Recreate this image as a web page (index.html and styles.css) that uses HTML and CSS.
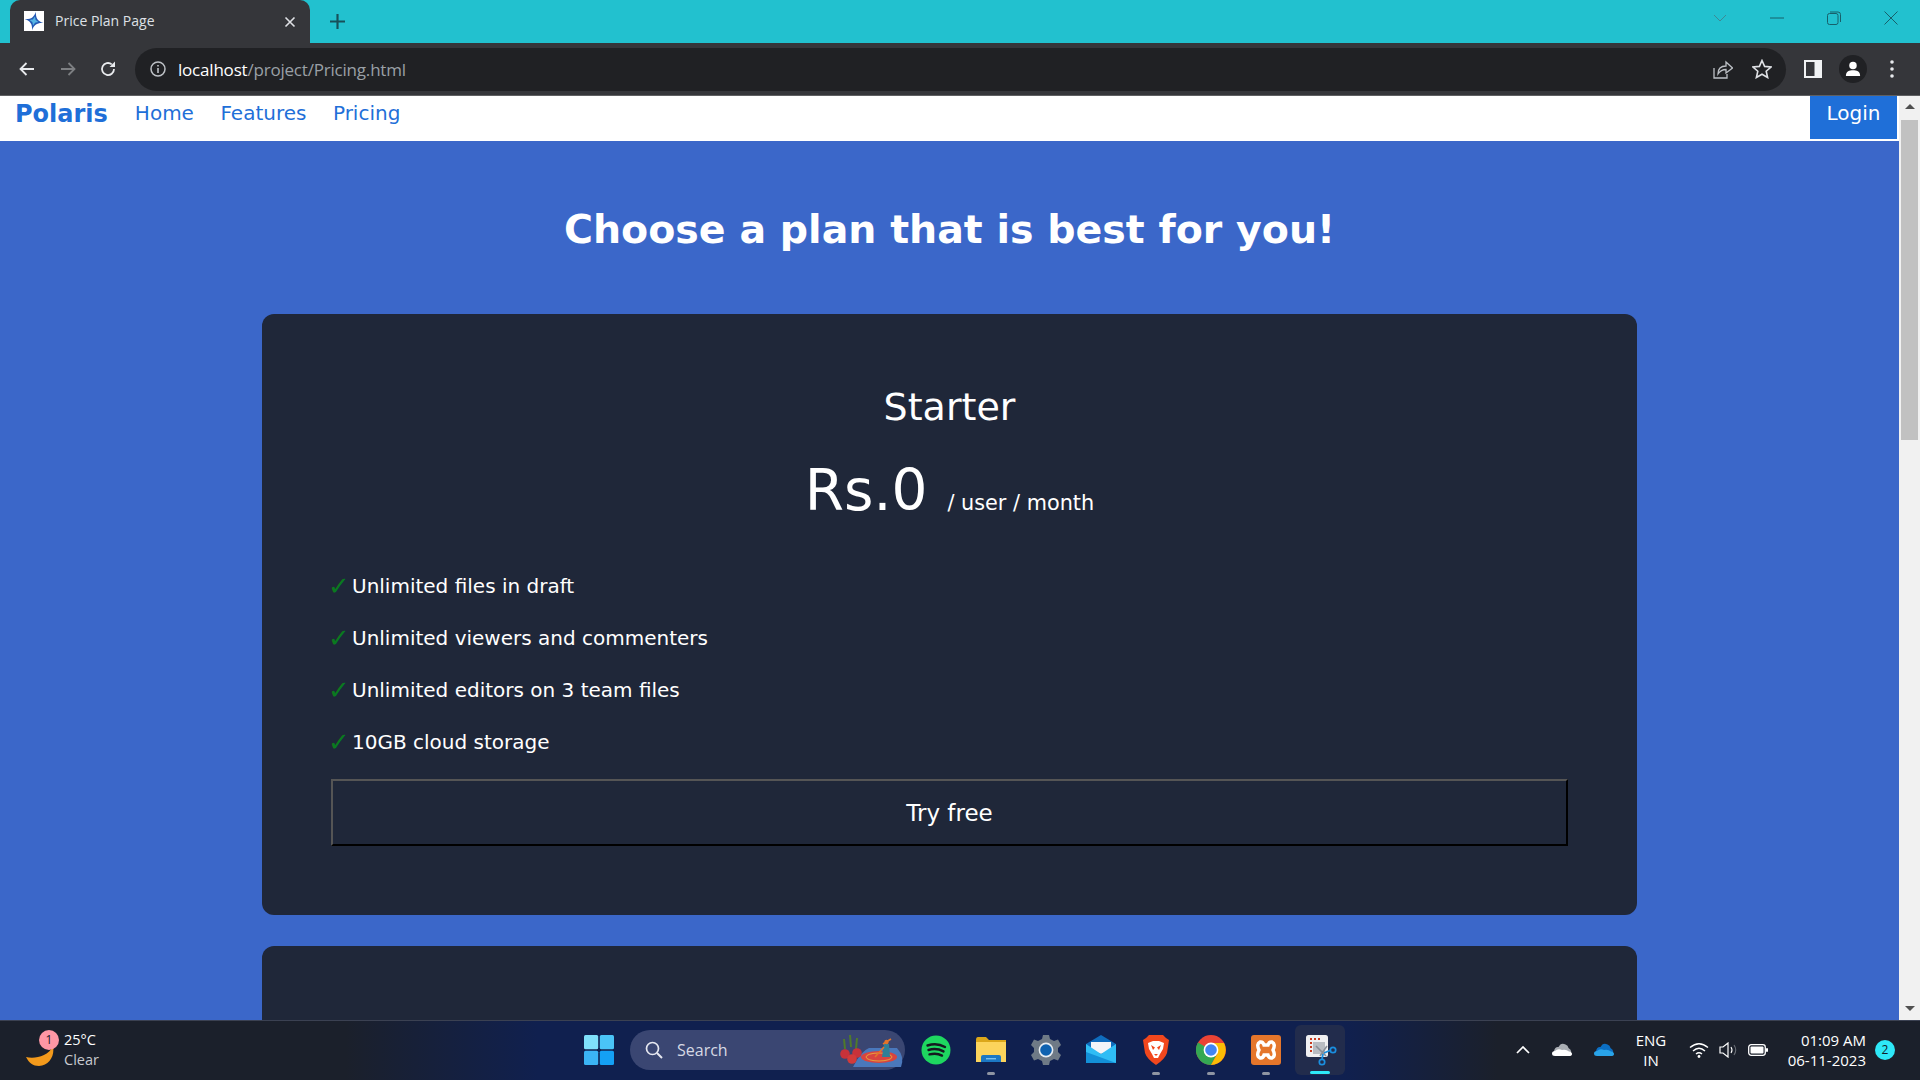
FILE: index.html
```html
<!doctype html>
<html lang="en">
<head>
	<meta charset="UTF-8">
	<title>Price Plan Page</title>
	<link rel="stylesheet" href="styles.css">
</head>
<body>
	<div class="screen">
		<!-- browser tabs -->
		<div class="tabstrip">
			<div class="tab">
				<svg class="favicon" viewBox="0 0 20 20"><rect width="20" height="20" fill="#fff"/><g transform="rotate(12 10 10)"><path d="M10 0.5 C10.8 6.5 13.5 9.2 19.5 10 C13.5 10.8 10.8 13.5 10 19.5 C9.2 13.5 6.5 10.8 0.5 10 C6.5 9.2 9.2 6.5 10 0.5Z" fill="#2458b4"/><path d="M10 5.5 L12 10 L10 14.5 L8 10Z M5.5 10 L10 8 L14.5 10 L10 12Z" fill="#55b4e4"/></g></svg>
				<span class="tab-title">Price Plan Page</span>
				<svg class="tab-close" viewBox="0 0 12 12"><path d="M1.5 1.5 L10.5 10.5 M10.5 1.5 L1.5 10.5" stroke="#dfe1e5" stroke-width="1.6"/></svg>
			</div>
			<svg class="tab-new" viewBox="0 0 14 14"><path d="M7 0 V14 M0 7 H14" stroke="#17505a" stroke-width="2"/></svg>
			<div class="win-btns">
				<svg class="win-btn" viewBox="0 0 14 14"><path d="M1 4 L7 10 L13 4" fill="none" stroke="#3c8a95" stroke-width="1"/></svg>
				<svg class="win-btn" viewBox="0 0 14 14"><path d="M0 7 H14" stroke="#17606b" stroke-width="1"/></svg>
				<svg class="win-btn" viewBox="0 0 14 14"><rect x="0.5" y="2.5" width="10.5" height="11" rx="2" fill="none" stroke="#17606b"/><path d="M3 1 H11 Q13.5 1 13.5 3.5 V11" fill="none" stroke="#17606b"/></svg>
				<svg class="win-btn" viewBox="0 0 14 14"><path d="M0.5 0.5 L13.5 13.5 M13.5 0.5 L0.5 13.5" stroke="#17606b" stroke-width="1"/></svg>
			</div>
		</div>

		<!-- address bar -->
		<div class="toolbar">
			<svg class="tool-icon" viewBox="0 0 18 18"><path d="M16 9 H3 M8.5 3 L2.5 9 L8.5 15" fill="none" stroke="#e8eaed" stroke-width="1.8"/></svg>
			<svg class="tool-icon" viewBox="0 0 18 18"><path d="M2 9 H15 M9.5 3 L15.5 9 L9.5 15" fill="none" stroke="#7d7f82" stroke-width="1.8"/></svg>
			<svg class="tool-icon reload" viewBox="0 0 18 18"><path d="M15 9 A6 6 0 1 1 12.8 4.4" fill="none" stroke="#e8eaed" stroke-width="1.8"/><path d="M16 1.5 V7 H10.5Z" fill="#e8eaed"/></svg>
			<div class="omnibox">
				<svg class="info" viewBox="0 0 16 16"><circle cx="8" cy="8" r="7" fill="none" stroke="#bdc1c6" stroke-width="1.5"/><path d="M8 7 V12 M8 4 V5.6" stroke="#bdc1c6" stroke-width="1.6"/></svg>
				<span class="url"><b>localhost</b>/project/Pricing.html</span>
				<svg class="omni-icon" viewBox="0 0 20 20"><path d="M1 9 V19 H14 V15" fill="none" stroke="#bdc1c6" stroke-width="1.3"/><path d="M5 15 C5 9 9 7 13 7 V3 L19.5 9 L13 14 V10.5 C9 10.5 7 12 5 15Z" fill="none" stroke="#bdc1c6" stroke-width="1.3"/></svg>
				<svg class="omni-icon" viewBox="0 0 20 20"><path d="M10 1.5 L12.6 7.4 L19 8 L14.2 12.2 L15.6 18.5 L10 15.2 L4.4 18.5 L5.8 12.2 L1 8 L7.4 7.4Z" fill="none" stroke="#dfe1e5" stroke-width="1.6"/></svg>
			</div>
			<svg class="panel-icon" viewBox="0 0 18 18"><rect width="18" height="18" fill="#f1f3f4"/><rect x="2" y="2" width="8.5" height="14" fill="#35363a"/></svg>
			<div class="profile">
				<svg viewBox="0 0 18 18"><circle cx="9" cy="5" r="4.2" fill="#fff"/><path d="M1 17 C1 11.5 5 10.5 9 10.5 C13 10.5 17 11.5 17 17Z" fill="#fff"/></svg>
			</div>
			<svg class="dots" viewBox="0 0 4 18"><circle cx="2" cy="2" r="1.8" fill="#e8eaed"/><circle cx="2" cy="9" r="1.8" fill="#e8eaed"/><circle cx="2" cy="16" r="1.8" fill="#e8eaed"/></svg>
		</div>

		<div class="viewport">
			<div class="page">
				<nav class="nav">
					<a class="brand">Polaris</a>
					<a class="nav-link">Home</a>
					<a class="nav-link">Features</a>
					<a class="nav-link">Pricing</a>
					<a class="login">Login</a>
				</nav>
				<h1 class="title">Choose a plan that is best for you!</h1>
				<section class="card">
					<h2 class="plan">Starter</h2>
					<p class="price"><span class="amount">Rs.0</span><span class="per">/ user / month</span></p>
					<ul class="features">
						<li><span class="tick">✓</span>Unlimited files in draft</li>
						<li><span class="tick">✓</span>Unlimited viewers and commenters</li>
						<li><span class="tick">✓</span>Unlimited editors on 3 team files</li>
						<li><span class="tick">✓</span>10GB cloud storage</li>
					</ul>
					<button class="try">Try free</button>
				</section>
				<section class="card card-next"></section>
			</div>
			<div class="scrollbar">
				<span class="arrow-up"></span>
				<span class="thumb"></span>
				<span class="arrow-down"></span>
			</div>
		</div>

		<!-- windows taskbar -->
		<div class="taskbar">
			<div class="weather">
				<div class="moon">
					<svg viewBox="0 0 28 20"><path d="M0 11 C8 13 22 11 27 0 C29 10 23 20 13 20 C7 20 3 17 0 11Z" fill="#f39a1c"/></svg>
					<span class="moon-badge">1</span>
				</div>
				<div class="weather-text">
					<span>25°C</span>
					<span class="clear">Clear</span>
				</div>
			</div>
			<div class="apps">
				<div class="app">
					<svg class="icon-30" viewBox="0 0 30 30"><rect width="14.2" height="14.2" rx="1.5" fill="#7fe0fb"/><rect x="15.8" width="14.2" height="14.2" rx="1.5" fill="#4ac4f7"/><rect y="15.8" width="14.2" height="14.2" rx="1.5" fill="#3bb4f5"/><rect x="15.8" y="15.8" width="14.2" height="14.2" rx="1.5" fill="#14a0f5"/></svg>
				</div>
				<div class="search">
					<svg class="search-icon" viewBox="0 0 18 18"><circle cx="7.5" cy="7.5" r="6" fill="none" stroke="#e6e8f0" stroke-width="1.7"/><path d="M12 12 L17 17" stroke="#e6e8f0" stroke-width="1.9"/></svg>
					<span class="search-text">Search</span>
					<svg class="search-art" viewBox="0 0 66 34"><path d="M14 34 Q22 18 30 15 H58 Q66 24 62 34Z" fill="#4a78bc"/><ellipse cx="40" cy="24" rx="18" ry="6" fill="#d8443f"/><ellipse cx="40" cy="24" rx="13" ry="4" fill="none" stroke="#e8b93c" stroke-width="0.8"/><path d="M43 24 L45 11 H50 L51 24Z" fill="#2f7f96"/><circle cx="47.5" cy="9" r="2.2" fill="#e2742a"/><path d="M36 24 L45 14 M44 11 L52 6" stroke="#e2742a" stroke-width="1.6"/><path d="M6 16 L5 6 M12 14 L11 2 M17 16 L18 5" stroke="#4f7a2a" stroke-width="2"/><circle cx="6" cy="21" r="4.8" fill="#c8323a"/><circle cx="18" cy="20" r="4.8" fill="#c8323a"/><circle cx="13" cy="26" r="4.8" fill="#d23a3a"/></svg>
				</div>
				<div class="app">
					<svg class="icon-30" viewBox="0 0 30 30"><circle cx="15" cy="15" r="14.5" fill="#1ed760"/><path d="M6.5 10.5 C12 8.8 19 9.2 24 12 M7.5 15 C12 13.6 18 14 22.5 16.4 M8.5 19.4 C12.5 18.4 17.5 18.6 21 20.6" fill="none" stroke="#15191f" stroke-width="2.4" stroke-linecap="round"/></svg>
				</div>
				<div class="app app-open">
					<svg class="icon-30" viewBox="0 0 30 30"><path d="M0 5 Q0 2 2 2 H10 L13 5 H30 V27 H0Z" fill="#dca71a"/><rect y="7" width="30" height="20" fill="#fcd45c"/><path d="M5 27 V22 Q5 20 7 20 H23 Q25 20 25 22 V27Z" fill="#1c78c4"/><rect x="10" y="23" width="10" height="1.4" fill="#7cc0ee"/></svg>
				</div>
				<div class="app">
					<svg class="icon-30" viewBox="0 0 30 30"><path d="M12 0 H18 L19 4 L23 6 L27 4.5 L30 10 L27 13 V17 L30 20 L27 25.5 L23 24 L19 26 L18 30 H12 L11 26 L7 24 L3 25.5 L0 20 L3 17 V13 L0 10 L3 4.5 L7 6 L11 4Z" fill="#6f7a86"/><circle cx="15" cy="15" r="7.4" fill="#e8edf2"/><circle cx="15" cy="15" r="5.8" fill="#0f62b0"/></svg>
				</div>
				<div class="app">
					<svg class="icon-30" viewBox="0 0 30 30"><path d="M0 9 L15 0 L30 9 V14 H0Z" fill="#0f6cbd"/><path d="M5 7 H25 V15 L15 19 L5 15Z" fill="#f3f5f8"/><path d="M0 9 L15 19 L30 9 V28 H0Z" fill="#2fbdf5"/><path d="M0 28 V17 L30 28Z" fill="#1390d8"/></svg>
				</div>
				<div class="app app-open">
					<svg class="icon-brave" viewBox="0 0 26 30"><path d="M6 0 H20 L23 3 L26 5 L24 18 Q22 24 13 30 Q4 24 2 18 L0 5 L3 3Z" fill="#f1471d"/><path d="M5 8 L10 6 H16 L21 8 L20 14 L17 19 L15 23 H11 L9 19 L6 14Z" fill="#fff"/><path d="M8 10 L12 12.5 L10 15Z M18 10 L14 12.5 L16 15Z M11 19 H15 L13 21Z" fill="#f1471d"/></svg>
				</div>
				<div class="app app-open">
					<svg class="icon-30" viewBox="0 0 30 30"><circle cx="15" cy="15" r="15" fill="#ea4335"/><path d="M15 15 L2 7.5 A15 15 0 0 0 15 30 L22 17Z" fill="#34a853"/><path d="M15 8 H28 A15 15 0 0 1 15 30 L21.5 18.5Z" fill="#fbbc05"/><circle cx="15" cy="15" r="7.4" fill="#fff"/><circle cx="15" cy="15" r="5.8" fill="#4285f4"/></svg>
				</div>
				<div class="app app-open">
					<svg class="icon-30" viewBox="0 0 30 30"><rect width="30" height="30" rx="3" fill="#e5762b"/><path d="M9 7 Q12 6.5 13 10 H17 Q18 6.5 21 7 Q25 9 22 15 Q25 21 21 23 Q18 23.5 17 20 H13 Q12 23.5 9 23 Q5 21 8 15 Q5 9 9 7Z" fill="none" stroke="#fff" stroke-width="3.4"/></svg>
				</div>
				<div class="app app-active">
					<svg class="icon-snip" viewBox="0 0 36 32"><rect width="22" height="22" rx="2.5" fill="#f0f0f2"/><rect x="7" y="7" width="12" height="12" fill="#b9bcc2"/><path d="M4 4 H6 M8 4 H10 M12 4 H14 M4 8 H6 M4 12 H6 M4 16 H6" stroke="#c8391f" stroke-width="2.2" fill="none"/><path d="M10 11 L20 21 M21 11 L14 21" stroke="#8a8f98" stroke-width="1.6"/><path d="M18 18 L25 15" stroke="#1a8fe0" stroke-width="1.8"/><path d="M17 19 L16 24" stroke="#1a8fe0" stroke-width="1.8"/><circle cx="27" cy="15" r="2.7" fill="none" stroke="#1a8fe0" stroke-width="1.7"/><circle cx="16" cy="27" r="2.7" fill="none" stroke="#1a8fe0" stroke-width="1.7"/></svg>
				</div>
			</div>
			<div class="tray">
				<svg class="tray-chevron" viewBox="0 0 14 8"><path d="M1 7 L7 1 L13 7" fill="none" stroke="#fff" stroke-width="1.7"/></svg>
				<svg class="tray-cloud" viewBox="0 0 20 13"><path d="M2 8 Q3 3.5 6.5 4 Q9 -1 13.5 1.5 Q16 2 16.5 5 Q20 7 19 10 H2Z" fill="#a9adb3"/><path d="M0 10.5 Q0 8 3 8 Q6 5 10 7 Q14 6 17 8.5 Q20 9 20 11 Q20 13 17 13 H3 Q0 13 0 10.5Z" fill="#fff"/></svg>
				<svg class="tray-cloud" viewBox="0 0 20 13"><path d="M2 8 Q3 3.5 6.5 4 Q9 -1 13.5 1.5 Q16 2 16.5 5 Q20 7 19 10 H2Z" fill="#0c6fc4"/><path d="M0 10.5 Q0 8 3 8 Q6 5 10 7 Q14 6 17 8.5 Q20 9 20 11 Q20 13 17 13 H3 Q0 13 0 10.5Z" fill="#29a3e8"/></svg>
				<div class="lang"><span>ENG</span><span>IN</span></div>
				<svg class="tray-wifi" viewBox="0 0 20 16"><path d="M1 5.5 Q10 -2 19 5.5 M4 9 Q10 3.5 16 9 M7 12 Q10 9.5 13 12" fill="none" stroke="#fff" stroke-width="1.4"/><circle cx="10" cy="14.5" r="1.4" fill="#fff"/></svg>
				<svg class="tray-sound" viewBox="0 0 20 16"><path d="M1 5 H4 L9 1 V15 L4 11 H1Z" fill="none" stroke="#fff" stroke-width="1.2"/><path d="M12 5 Q14 8 12 11" fill="none" stroke="#fff" stroke-width="1.1"/><path d="M15 3 Q18.5 8 15 13" fill="none" stroke="#6a6e76" stroke-width="1.1"/></svg>
				<svg class="tray-battery" viewBox="0 0 20 12"><rect x="0.7" y="0.7" width="16.6" height="10.6" rx="2.5" fill="none" stroke="#fff" stroke-width="1.3"/><rect x="2.5" y="2.5" width="13" height="7" rx="1" fill="#fff"/><rect x="18" y="4" width="2" height="4" rx="1" fill="#fff"/></svg>
				<div class="clock"><span>01:09 AM</span><span>06-11-2023</span></div>
				<span class="notify">2</span>
			</div>
		</div>
	</div>
</body>
</html>
```

FILE: styles.css
```css
*{margin: 0;padding: 0;box-sizing: border-box;list-style: none;}
html,body{height: 100%;overflow: hidden;}
body{font-family: "Open Sans","Noto Sans",sans-serif;background: #1b202b;}
.screen{height: 1080px;display: flex;flex-direction: column;}

/* tab strip */
.tabstrip{height: 43px;flex: none;background: #22c1cf;display: flex;align-items: flex-start;padding-left: 10px;}
.tab{width: 300px;height: 43px;background: #35363a;border-radius: 10px 10px 0 0;display: flex;align-items: center;padding: 0 14px 2px;color: #dee1e6;font-size: 14px;position: relative;}
.favicon{width: 20px;height: 20px;flex: none;margin-right: 11px;}
.tab-title{flex: 1;}
.tab-close{width: 12px;height: 12px;margin-top: 2px;}
.tab-new{width: 15px;height: 15px;margin: 14px 0 0 20px;}
.win-btns{margin-left: auto;display: flex;gap: 43px;padding: 11px 22px 0 0;}
.win-btn{width: 14px;height: 14px;}

/* toolbar */
.toolbar{height: 53px;flex: none;background: #35363a;display: flex;align-items: center;padding: 0 0 0 18px;border-bottom: 1px solid #5f6062;}
.tool-icon{width: 18px;height: 18px;margin-right: 23px;}
.reload{margin-left: -1px;}
.omnibox{width: 1651px;height: 43px;margin-left: -5px;background: #202124;border-radius: 22px;display: flex;align-items: center;padding: 0 14px 0 15px;color: #9aa0a6;font-size: 17px;}
.info{width: 16px;height: 16px;margin-right: 12px;flex: none;}
.url{flex: 1;letter-spacing: -0.2px;}
.url b{font-weight: 400;color: #fff;}
.omni-icon{width: 20px;height: 20px;margin-left: 19px;}
.panel-icon{width: 18px;height: 18px;margin-left: 18px;}
.profile{width: 28px;height: 28px;margin-left: 17px;border-radius: 50%;background: #202124;display: flex;align-items: center;justify-content: center;}
.profile svg{width: 16px;height: 16px;}
.dots{width: 4px;height: 18px;margin-left: 23px;}

/* viewport */
.viewport{flex: 1;min-height: 0;display: flex;}
.page{flex: 1;min-width: 0;overflow: hidden;background: #3b67c9;font-family: "DejaVu Sans",Verdana,sans-serif;color: #fff;}
.nav{height: 45px;background: #fff;display: flex;align-items: flex-start;padding: 0 2px 0 15px;color: #1f6fd8;font-size: 20px;}
.nav a{line-height: 34px;}
.nav .brand{font-size: 24px;font-weight: 700;margin-right: 27px;line-height: 36px;}
.nav-link{margin-right: 26.5px;}
.nav .login{margin: 0 0 0 auto;width: 87px;height: 43px;text-align: center;background: #1f6fd8;color: #fff;}
.title{font-size: 39.5px;font-weight: 700;text-align: center;line-height: 48px;margin: 64px 0 61px;}
.card{margin: 0 262px;padding: 69px;background: #1f2739;border-radius: 12px;}
.plan{font-size: 38px;font-weight: 400;text-align: center;line-height: 46px;margin-top: 1px;}
.price{text-align: center;margin-top: 23px;line-height: 76px;}
.amount{font-size: 56.5px;}
.per{font-size: 20.8px;margin-left: 20px;}
.features{margin-top: 17px;font-size: 20px;}
.features li{height: 52px;line-height: 52px;display: flex;}
.tick{color: #0a7a1f;width: 23px;margin-left: -3px;margin-right: 1px;font-size: 26px;flex: none;}
.try{display: block;width: 100%;height: 67px;margin-top: 11px;background: transparent;border: 2px solid;border-color: #555 #000 #000 #555;color: #fff;font: 23px "DejaVu Sans",Verdana,sans-serif;}
.card-next{margin-top: 31px;height: 400px;}
.scrollbar{width: 21px;flex: none;background: #f1f1f1;display: flex;flex-direction: column;align-items: center;padding: 8px 0 9px;}
.arrow-up{border: 5px solid transparent;border-top: 0;border-bottom: 5px solid #505050;}
.thumb{width: 17px;height: 320px;background: #c1c1c1;margin-top: 11px;}
.arrow-down{margin-top: auto;border: 5px solid transparent;border-bottom: 0;border-top: 5px solid #505050;}

/* taskbar */
.taskbar{height: 60px;flex: none;display: flex;align-items: center;padding-bottom: 2px;border-top: 1px solid #3b4152;background: linear-gradient(90deg,#1b202b 0,#1b202b 18%,#10204f 28%,#10204f 70%,#1b202b 78%,#1b202b 100%);color: #fff;font-size: 14px;}
.weather{width: 571px;flex: none;display: flex;padding-left: 26px;align-items: center;}
.moon{width: 28px;height: 20px;position: relative;margin: 12px 10px 0 0;}
.moon svg{display: block;width: 28px;height: 20px;}
.moon-badge{position: absolute;left: 13px;top: -16px;width: 20px;height: 20px;border-radius: 50%;background: #ff97a5;color: #1b202b;font-size: 12px;line-height: 20px;text-align: center;}
.weather-text{display: flex;flex-direction: column;line-height: 20px;font-size: 14.5px;}
.clear{color: #c8cad0;}
.apps{display: flex;align-items: center;}
.app{width: 55px;height: 50px;display: flex;align-items: center;justify-content: center;position: relative;}
.icon-30{width: 30px;height: 30px;display: block;}
.icon-brave{width: 26px;height: 30px;display: block;}
.icon-snip{width: 36px;height: 32px;display: block;margin: 3px 0 0 7px;}
.app-open::after{content: "";position: absolute;bottom: 0;left: 50%;margin-left: -4px;width: 8px;height: 3px;border-radius: 2px;background: #8f95a3;}
.app-active{width: 50px;margin: 0 0 0 2px;border-radius: 6px;background: #222c4c;}
.app-active::after{content: "";position: absolute;bottom: 1px;left: 50%;margin-left: -10px;width: 20px;height: 3px;border-radius: 2px;background: #2ee8f8;}
.search{width: 275px;height: 40px;margin: 0 3px 0 4px;border-radius: 20px;background: #3a4672;display: flex;align-items: center;padding: 0 0 0 15px;color: #d6d9e4;font-size: 16px;}
.search-icon{width: 18px;height: 18px;margin-right: 14px;}
.search-text{flex: 1;}
.search-art{width: 66px;height: 34px;}
.tray{flex: 1;display: flex;align-items: center;height: 100%;font-size: 15px;}
.tray-chevron{width: 14px;height: 8px;margin-left: 171px;}
.tray-cloud{width: 20px;height: 13px;margin-left: 22px;}
.lang{width: 40px;margin-left: 17px;display: flex;flex-direction: column;align-items: center;line-height: 20px;}
.tray-wifi{width: 20px;height: 16px;margin-left: 18px;}
.tray-sound{width: 20px;height: 16px;margin-left: 10px;}
.tray-battery{width: 20px;height: 12px;margin-left: 9px;}
.clock{margin-left: auto;margin-right: 9px;display: flex;flex-direction: column;align-items: flex-end;line-height: 20px;}
.notify{width: 20px;height: 20px;margin-right: 25px;border-radius: 50%;background: #2ee8f8;color: #10202b;font-size: 12px;line-height: 20px;text-align: center;}
```
